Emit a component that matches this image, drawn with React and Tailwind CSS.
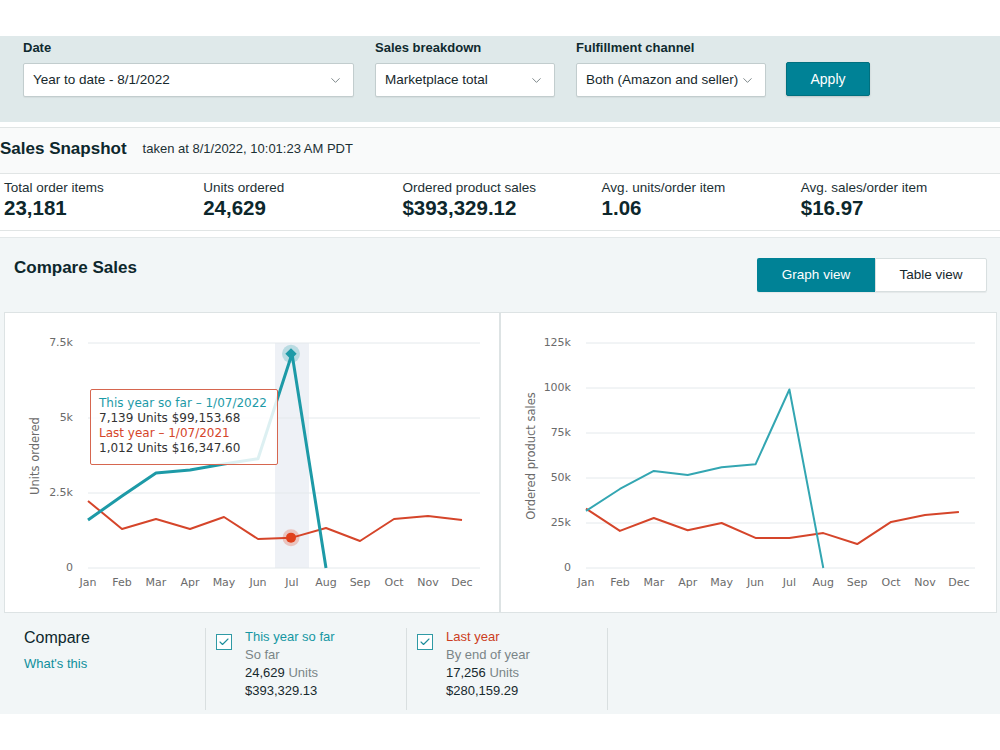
import { ChevronDown, Check } from "lucide-react";

const MONTHS = ["Jan", "Feb", "Mar", "Apr", "May", "Jun", "Jul", "Aug", "Sep", "Oct", "Nov", "Dec"];

// monthly series, this year stops at Aug (0 = no data yet)
const unitsThisYear = [1600, 2400, 3167, 3267, 3467, 3643, 7139, 0];
const unitsLastYear = [2233, 1300, 1633, 1300, 1700, 967, 1012, 1333, 900, 1633, 1733, 1600];
const salesThisYear = [31700, 43900, 53900, 51700, 56000, 57600, 99153, 0];
const salesLastYear = [33000, 20600, 27800, 21000, 25000, 16700, 16700, 19400, 13300, 25600, 29400, 31100];

const LINE_TEAL = "#1d9aa7";
const LINE_RED = "#d5452a";

const toPoints = (arr, fx, fy) => arr.map((v, i) => `${fx(i)},${fy(v)}`).join(" ");

function Field({ label, width, value }) {
  return (
    <div className={width}>
      <div className="h-4 text-[13px] leading-4 font-bold text-[#0f2a2f]">{label}</div>
      <div className="mt-[7px] h-[34px] bg-white border border-[#c2cdce] rounded-[2px] shadow-[0_1px_1px_rgba(0,0,0,0.05)] flex items-center justify-between pl-[9px] pr-[10px] text-[13.5px] text-[#16282c]">
        <span className="whitespace-nowrap">{value}</span>
        <ChevronDown size={15} strokeWidth={1.4} className="shrink-0 text-[#6b7779]" />
      </div>
    </div>
  );
}

function Stat({ label, value }) {
  return (
    <div className="w-[201px]">
      <div className="text-[13.5px] leading-4 text-[#1c3034]">{label}</div>
      <div className="text-[20.5px] leading-6 font-bold text-[#0d272c]">{value}</div>
    </div>
  );
}

function UnitsChart() {
  const fx = (i) => 88 + i * 34;
  const fy = (v) => 567 - v * 0.03;
  const ticks = [
    ["7.5k", 342],
    ["5k", 417],
    ["2.5k", 492],
    ["0", 567],
  ];
  return (
    <div className="relative w-[496px] h-[301px] bg-white border border-[#dde3e4]">
      <svg width="494" height="299" viewBox="5 312 494 299" className="block font-['DejaVu_Sans',sans-serif]">
        <rect x="275" y="342" width="34" height="225" fill="#eef1f6" />
        {ticks.map(([t, y]) => (
          <g key={t}>
            <line x1="88" x2="480" y1={y} y2={y} stroke="#e4e9ec" strokeWidth="1" />
            <text x="73" y={y} textAnchor="end" dominantBaseline="middle" fontSize="11" fill="#6b6b6b">
              {t}
            </text>
          </g>
        ))}
        {MONTHS.map((m, i) => (
          <text key={m} x={fx(i)} y="582" textAnchor="middle" dominantBaseline="middle" fontSize="11" fill="#6b6b6b">
            {m}
          </text>
        ))}
        <text x="35" y="455" transform="rotate(-90 35 455)" textAnchor="middle" dominantBaseline="middle" fontSize="11.5" fill="#6b6b6b">
          Units ordered
        </text>
        <polyline points={toPoints(unitsLastYear, fx, fy)} fill="none" stroke={LINE_RED} strokeWidth="2" strokeLinejoin="round" />
        <polyline points={toPoints(unitsThisYear, fx, fy)} fill="none" stroke={LINE_TEAL} strokeWidth="3" strokeLinejoin="round" />
        {/* hovered month markers */}
        <circle cx="291" cy={fy(7139)} r="9" fill={LINE_TEAL} opacity="0.25" />
        <rect x="287" y={fy(7139) - 4} width="8" height="8" fill={LINE_TEAL} transform={`rotate(45 291 ${fy(7139)})`} />
        <circle cx="291" cy={fy(1012)} r="8.5" fill="#e0401c" opacity="0.25" />
        <circle cx="291" cy={fy(1012)} r="5" fill="#e0401c" />
      </svg>
      <div className="absolute left-[85px] top-[76px] w-[188px] h-[76px] border border-[#d6664f] rounded-[2px] bg-white/85 pl-[8px] pt-[6px] font-['DejaVu_Sans',sans-serif] text-[12px] leading-[15px] text-[#333]">
        <div className="text-[#1d9aa7]">This year so far – 1/07/2022</div>
        <div>7,139 Units $99,153.68</div>
        <div className="text-[#d5452a]">Last year – 1/07/2021</div>
        <div>1,012 Units $16,347.60</div>
      </div>
    </div>
  );
}

function SalesChart() {
  const fx = (i) => 586 + i * 33.9;
  const fy = (v) => 567 - v * 0.0018;
  const ticks = [
    ["125k", 342],
    ["100k", 387],
    ["75k", 432],
    ["50k", 477],
    ["25k", 522],
    ["0", 567],
  ];
  return (
    <div className="w-[497px] h-[301px] bg-white border border-[#dde3e4]">
      <svg width="495" height="299" viewBox="501 312 495 299" className="block font-['DejaVu_Sans',sans-serif]">
        {ticks.map(([t, y]) => (
          <g key={t}>
            <line x1="586" x2="975" y1={y} y2={y} stroke="#e4e9ec" strokeWidth="1" />
            <text x="571" y={y} textAnchor="end" dominantBaseline="middle" fontSize="11" fill="#6b6b6b">
              {t}
            </text>
          </g>
        ))}
        {MONTHS.map((m, i) => (
          <text key={m} x={fx(i)} y="582" textAnchor="middle" dominantBaseline="middle" fontSize="11" fill="#6b6b6b">
            {m}
          </text>
        ))}
        <text x="531" y="455" transform="rotate(-90 531 455)" textAnchor="middle" dominantBaseline="middle" fontSize="11.5" fill="#6b6b6b">
          Ordered product sales
        </text>
        <polyline points={toPoints(salesLastYear, fx, fy)} fill="none" stroke={LINE_RED} strokeWidth="2" strokeLinejoin="round" />
        <polyline points={toPoints(salesThisYear, fx, fy)} fill="none" stroke="#33a6b2" strokeWidth="2" strokeLinejoin="round" />
      </svg>
    </div>
  );
}

function CompareItem({ title, titleColor, sub, units, sales }) {
  return (
    <div className="w-[201px] h-[82px] border-l border-[#d9dfe0] flex pl-[10px] pt-[6px]">
      <div className="w-[16px] h-[16px] border border-[#2f9aa5] bg-white flex items-center justify-center">
        <Check size={12} strokeWidth={2.2} className="text-[#1d8e9b]" />
      </div>
      <div className="ml-[13px] -mt-[6px] text-[13px] leading-[18px]">
        <div className={titleColor}>{title}</div>
        <div className="text-[#7a8587]">{sub}</div>
        <div className="text-[#17292d]">
          {units} <span className="text-[#7a8587]">Units</span>
        </div>
        <div className="text-[#17292d]">{sales}</div>
      </div>
    </div>
  );
}

export default function App() {
  return (
    <div className="w-[1000px] h-[750px] bg-white overflow-hidden font-['Liberation_Sans',Arial,sans-serif]">
      <div className="h-9" />

      {/* Filters */}
      <div className="h-[86px] bg-[#dfe9ea] flex items-start gap-[21px] pl-[23px] pt-[4px]">
        <Field label="Date" width="w-[331px]" value="Year to date - 8/1/2022" />
        <Field label="Sales breakdown" width="w-[180px]" value="Marketplace total" />
        <Field label="Fulfillment channel" width="w-[190px]" value="Both (Amazon and seller)" />
        <button className="mt-[22px] -ml-px w-[84px] h-[34px] bg-[#008296] border border-[#00707f] rounded-[2px] shadow-[0_1px_2px_rgba(0,0,0,0.15)] text-white text-[14px]">
          Apply
        </button>
      </div>

      <div className="h-[5px]" />

      {/* Sales snapshot */}
      <div className="h-[47px] bg-[#f9fafa] border-y border-[#e1e5e5] flex items-center gap-4 pb-[4px]">
        <h2 className="text-[17px] font-bold text-[#0d272c]">Sales Snapshot</h2>
        <span className="text-[13px] text-[#1c3034]">taken at 8/1/2022, 10:01:23 AM PDT</span>
      </div>
      <div className="h-[57px] bg-white border-b border-[#e1e5e5] flex pl-[4px] pt-[6px]">
        <Stat label="Total order items" value="23,181" />
        <Stat label="Units ordered" value="24,629" />
        <Stat label="Ordered product sales" value="$393,329.12" />
        <Stat label="Avg. units/order item" value="1.06" />
        <Stat label="Avg. sales/order item" value="$16.97" />
      </div>

      {/* Compare sales */}
      <div className="mt-[6px] h-[477px] bg-[#f2f6f7] border-t border-[#e3e8e9]">
        <div className="flex items-start justify-between pl-[14px] pr-[13px] pt-[20px]">
          <h2 className="text-[17px] leading-5 font-bold text-[#0d272c]">Compare Sales</h2>
          <div className="flex h-[34px] rounded-[2px] shadow-[0_1px_1px_rgba(0,0,0,0.06)]">
            <button className="w-[118px] bg-[#008296] text-white text-[13.5px] rounded-l-[2px]">Graph view</button>
            <button className="w-[112px] bg-white border border-[#d8dfe0] text-[#16282c] text-[13.5px] rounded-r-[2px]">
              Table view
            </button>
          </div>
        </div>

        <div className="mt-[20px] ml-[4px] flex">
          <UnitsChart />
          <SalesChart />
        </div>

        <div className="flex pl-[4px] pt-[15px]">
          <div className="w-[201px] pl-[20px]">
            <div className="text-[16px] leading-5 text-[#0d272c]">Compare</div>
            <div className="mt-[6px] text-[13px] text-[#0f8f9c]">What's this</div>
          </div>
          <CompareItem title="This year so far" titleColor="text-[#1596a3]" sub="So far" units="24,629" sales="$393,329.13" />
          <CompareItem title="Last year" titleColor="text-[#cc3d22]" sub="By end of year" units="17,256" sales="$280,159.29" />
          <div className="h-[82px] border-l border-[#d9dfe0]" />
        </div>
      </div>
    </div>
  );
}
